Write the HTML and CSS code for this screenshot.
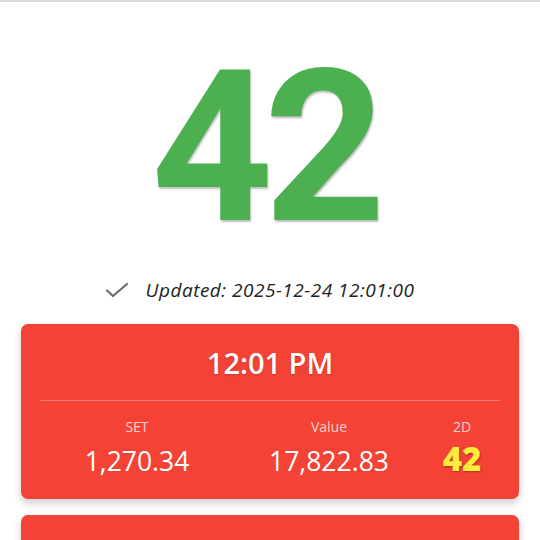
FILE: index.html
```html
<!DOCTYPE html>
<html>
<head>
<meta charset="utf-8">
<link rel="stylesheet" href="styles.css">
</head>
<body>
<div class="topbar"></div>
<main class="page">
  <div class="big">42</div>
  <div class="updated">
    <svg class="check" width="24" height="16" viewBox="0 0 24 16"><path d="M2 8.5 L8 14 L22 2" fill="none" stroke="#6b6b6b" stroke-width="2.2" stroke-linecap="round" stroke-linejoin="round"/></svg>
    <span>Updated: 2025-12-24 12:01:00</span>
  </div>
  <section class="card">
    <div class="time">12:01 PM</div>
    <div class="divider"></div>
    <div class="stats">
      <div class="stat"><div class="label">SET</div><div class="val">1,270.34</div></div>
      <div class="stat"><div class="label">Value</div><div class="val">17,822.83</div></div>
      <div class="stat"><div class="label">2D</div><div class="val twod">42</div></div>
    </div>
  </section>
  <section class="card"></section>
</main>
</body>
</html>
```
FILE: styles.css
```css
* { box-sizing: border-box; }
html, body { margin: 0; padding: 0; background: #fff; }
body { font-family: "Open Sans", "Noto Sans", sans-serif; width: 540px; height: 540px; overflow: hidden; }
.topbar { height: 2px; background: #d9d9d9; }
.page { padding: 0 21px 0 21px; display: flex; flex-direction: column; align-items: stretch; }
.big {
  font-family: Roboto, sans-serif; font-weight: 700; font-size: 212px; line-height: 1;
  color: #4caf50; text-align: center; margin-top: 40px; height: 223px;
  text-shadow: 1px 2px 2px rgba(0,0,0,0.25);
  letter-spacing: -9px; padding-right: 12px;
}
.updated { display: flex; align-items: center; justify-content: center; gap: 17px; margin-top: 12px; height: 26px; color: #222; padding-right: 17px; }
.updated span { font-style: italic; font-size: 19px; letter-spacing: 0.5px; font-family: "Open Sans", sans-serif; }
.check { margin-left: -4px; }
.card { background: #f44336; border-radius: 7px; box-shadow: 0 4px 8px rgba(0,0,0,0.2); margin-top: 21px; padding: 0 19px; height: 175px; color: #fff; }
.card + .card { margin-top: 16px; }
.time { text-align: center; font-size: 29px; font-weight: 600; padding-top: 20px; height: 76px; line-height: 38px; text-shadow: 0 1px 2px rgba(0,0,0,0.2); }
.divider { height: 1px; background: rgba(255,255,255,0.3); }
.stats { display: grid; grid-template-columns: 194px 190px 1fr; padding-top: 16px; }
.stat { display: flex; flex-direction: column; align-items: center; }
.label { font-size: 14px; color: rgba(255,255,255,0.75); height: 20px; line-height: 20px; }
.val { font-size: 26.5px; line-height: 34px; margin-top: 7px; }
.twod { color: #ffeb3b; font-weight: 800; font-size: 33px; text-shadow: 1px 1px 2px rgba(0,0,0,0.3); margin-top: 5px; }
```
